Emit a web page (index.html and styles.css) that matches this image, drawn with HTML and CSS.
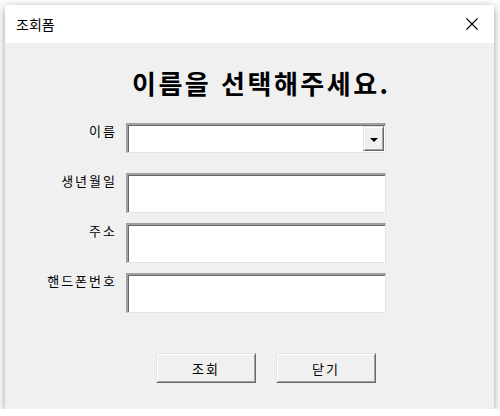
FILE: index.html
```html
<!DOCTYPE html>
<html lang="ko">
<head>
<meta charset="utf-8">
<title>조회폼</title>
<link rel="stylesheet" href="styles.css">
</head>
<body>
<div class="window">
  <div class="titlebar">
    <span class="title-text">조회폼</span>
    <svg class="close" width="12" height="12" viewBox="0 0 12 12"><path d="M0.5 0.5 L11.5 11.5 M11.5 0.5 L0.5 11.5" stroke="#000" stroke-width="1.1" fill="none"/></svg>
  </div>
  <div class="content">
    <h1 class="heading">이름을 선택해주세요.</h1>
    <div class="form">
      <label class="label">이름</label>
      <div class="combo"><span class="combo-btn"><span class="tri"></span></span></div>
      <label class="label">생년월일</label>
      <div class="textbox"></div>
      <label class="label">주소</label>
      <div class="textbox"></div>
      <label class="label">핸드폰번호</label>
      <div class="textbox"></div>
    </div>
    <div class="buttons">
      <button class="btn">조회</button>
      <button class="btn">닫기</button>
    </div>
  </div>
</div>
</body>
</html>
```
FILE: styles.css
```css
html, body {
  margin: 0;
  padding: 0;
  background: #ffffff;
}
body {
  font-family: "Noto Sans CJK KR", "Noto Sans", sans-serif;
  color: #000;
}
.window {
  margin: 5px 0 0 5px;
  width: 489px;
  height: 404px;
  background: #f0f0f0;
  box-shadow: 0 2px 8px rgba(0,0,0,0.4);
  display: flex;
  flex-direction: column;
}
.titlebar {
  height: 38px;
  background: #ffffff;
  display: flex;
  align-items: center;
  justify-content: space-between;
  padding: 0 16px 0 11px;
}
.title-text {
  font-size: 14px;
  line-height: 16px;
}
.close {
  display: block;
}
.content {
  padding-top: 25px;
}
.heading {
  margin: 0 0 0 127px;
  font-size: 26px;
  line-height: 30px;
  font-weight: 700;
  letter-spacing: 2.5px;
}
.form {
  margin-top: 25px;
  display: grid;
  grid-template-columns: 112px 260px;
  grid-template-rows: 50px 50px 50px 40px;
  column-gap: 9px;
  align-items: start;
}
.label {
  font-size: 13px;
  line-height: 16px;
  letter-spacing: 2px;
  text-align: right;
}
.textbox, .combo {
  box-sizing: border-box;
  background: #fff;
  border-style: solid;
  border-width: 2px 1px 1px 2px;
  border-color: #a0a0a0 #e3e3e3 #e3e3e3 #a0a0a0;
  box-shadow: inset 1px 1px 0 #696969;
}
.textbox {
  height: 40px;
}
.combo {
  height: 30px;
  display: flex;
  justify-content: flex-end;
  padding: 1px 1px 1px 0;
}
.combo-btn {
  box-sizing: border-box;
  width: 21px;
  height: 100%;
  background: #f0f0f0;
  border: 1px solid;
  border-color: #e3e3e3 #696969 #696969 #e3e3e3;
  box-shadow: inset 1px 1px 0 #fff, inset -1px -1px 0 #a0a0a0;
  display: flex;
  align-items: center;
  justify-content: center;
}
.tri {
  width: 0;
  height: 0;
  border-left: 4px solid transparent;
  border-right: 4px solid transparent;
  border-top: 4px solid #000;
  margin-top: 2px;
}
.buttons {
  margin: 40px 0 0 151px;
  display: flex;
  gap: 20px;
}
.btn {
  box-sizing: border-box;
  width: 100px;
  height: 30px;
  margin: 0;
  padding: 0;
  font-family: "Noto Sans CJK KR", "Noto Sans", sans-serif;
  font-size: 13px;
  letter-spacing: 2px;
  color: #000;
  background: #f0f0f0;
  border: 1px solid;
  border-color: #e3e3e3 #696969 #696969 #e3e3e3;
  box-shadow: inset 1px 1px 0 #fff, inset -1px -1px 0 #a0a0a0;
}
```
